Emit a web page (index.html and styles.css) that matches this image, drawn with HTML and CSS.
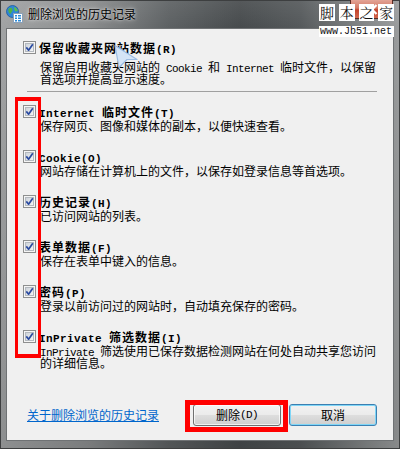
FILE: index.html
```html
<!DOCTYPE html>
<html lang="zh-CN">
<head>
<meta charset="utf-8">
<title>删除浏览的历史记录</title>
<link rel="stylesheet" href="styles.css">
</head>
<body>
<svg width="0" height="0" class="defs">
  <defs>
    <linearGradient id="cbg" x1="0" y1="0" x2="1" y2="1">
      <stop offset="0" stop-color="#cbd1d8"/>
      <stop offset="1" stop-color="#f6f7f8"/>
    </linearGradient>
    <symbol id="chk" viewBox="0 0 13 13">
      <rect x="0.5" y="0.5" width="12" height="12" fill="#f5f5f5" stroke="#8e8f8f"/>
      <rect x="2.5" y="2.5" width="8" height="8" fill="url(#cbg)" stroke="#b4b9bf"/>
      <path d="M3.3 6.4 L5.6 9.2 L9.8 3.2" fill="none" stroke="#2a4aa0" stroke-width="1.7" stroke-linejoin="round"/>
    </symbol>
  </defs>
</svg>
<div class="window">
  <div class="titlebar">
    <svg class="appicon" width="17" height="18" viewBox="0 0 17 18">
      <circle cx="6.5" cy="6.5" r="6" fill="#2f86d6" stroke="#1a5a9e" stroke-width="0.8"/>
      <path d="M2.5 4 C4 2 6 2.5 6.5 4.5 C7 6.5 5 7 4.5 9 C3 8.5 1.8 6 2.5 4 Z" fill="#4fb04a"/>
      <path d="M8 2 C10 2.5 11.5 4 11.8 6 L9 6.5 C8.5 5 8 3.5 8 2 Z" fill="#5cc04f"/>
      <rect x="7.5" y="8.5" width="9" height="9" fill="#ffffff" stroke="#8aa0b8"/>
      <rect x="9" y="10" width="2" height="1.5" fill="#2a8ad8"/>
      <rect x="12" y="10" width="3" height="1.5" fill="#2a8ad8"/>
      <rect x="9" y="12.5" width="2" height="1.5" fill="#2a8ad8"/>
      <rect x="12" y="12.5" width="3" height="1.5" fill="#2a8ad8"/>
      <rect x="9" y="15" width="2" height="1.5" fill="#2a8ad8"/>
      <rect x="12" y="15" width="3" height="1.5" fill="#2a8ad8"/>
    </svg>
    <span class="title">删除浏览的历史记录</span>
    <div class="closebtn">
      <svg width="12" height="11" viewBox="0 0 12 11"><path d="M1.5 1 L10.5 10 M10.5 1 L1.5 10" stroke="#ffffff" stroke-width="2.2"/></svg>
    </div>
  </div>

  <div class="client">
    <div class="first row">
      <svg class="cb" width="13" height="13"><use href="#chk"/></svg>
      <div class="text">
        <div class="label">保留收藏夹网站数据<span class="en">(R)</span></div>
        <div class="desc">保留启用收藏夹网站的<span class="en"> Cookie </span>和<span class="en"> Internet </span>临时文件，以保留<br>首选项并提高显示速度。</div>
      </div>
    </div>
    <div class="sep"></div>
    <div class="items">
      <div class="row">
        <svg class="cb" width="13" height="13"><use href="#chk"/></svg>
        <div class="text">
          <div class="label"><span class="en">Internet </span>临时文件<span class="en">(T)</span></div>
          <div class="desc">保存网页、图像和媒体的副本，以便快速查看。</div>
        </div>
      </div>
      <div class="row">
        <svg class="cb" width="13" height="13"><use href="#chk"/></svg>
        <div class="text">
          <div class="label"><span class="en">Cookie(O)</span></div>
          <div class="desc">网站存储在计算机上的文件，以保存如登录信息等首选项。</div>
        </div>
      </div>
      <div class="row">
        <svg class="cb" width="13" height="13"><use href="#chk"/></svg>
        <div class="text">
          <div class="label">历史记录<span class="en">(H)</span></div>
          <div class="desc">已访问网站的列表。</div>
        </div>
      </div>
      <div class="row">
        <svg class="cb" width="13" height="13"><use href="#chk"/></svg>
        <div class="text">
          <div class="label">表单数据<span class="en">(F)</span></div>
          <div class="desc">保存在表单中键入的信息。</div>
        </div>
      </div>
      <div class="row">
        <svg class="cb" width="13" height="13"><use href="#chk"/></svg>
        <div class="text">
          <div class="label">密码<span class="en">(P)</span></div>
          <div class="desc">登录以前访问过的网站时，自动填充保存的密码。</div>
        </div>
      </div>
      <div class="row">
        <svg class="cb" width="13" height="13"><use href="#chk"/></svg>
        <div class="text">
          <div class="label"><span class="en">InPrivate </span>筛选数据<span class="en">(I)</span></div>
          <div class="desc"><span class="en">InPrivate </span>筛选使用已保存数据检测网站在何处自动共享您访问<br>的详细信息。</div>
        </div>
      </div>
    </div>
    <div class="footer">
      <a class="link" href="#">关于删除浏览的历史记录</a>
      <div class="buttons">
        <button class="btn">删除<span class="en">(D)</span></button>
        <button class="btn default">取消</button>
      </div>
    </div>
  </div>

  <div class="watermark">
    <div class="wm-chars"><span>脚</span><span>本</span><span>之</span><span>家</span></div>
    <div class="wm-url">www.Jb51.net</div>
  </div>
  <svg class="cursor" width="28" height="26" viewBox="0 0 28 26">
    <path d="M3 1.5 L25 15.5 L15 15.5 L7 23.5 Z" fill="#d4e4f6" stroke="#9cbce2" stroke-width="1.2" stroke-linejoin="round"/>
  </svg>
  <div class="mark mark-list"></div>
  <div class="mark mark-btn"></div>
</div>
</body>
</html>
```

FILE: styles.css
```css
* { box-sizing: border-box; }

html, body {
  margin: 0;
  padding: 0;
}

body {
  width: 400px;
  height: 449px;
  overflow: hidden;
  font-family: "Noto Sans CJK SC", "Noto Sans", sans-serif;
  font-size: 12px;
  color: #000;
}

.defs {
  position: absolute;
  width: 0;
  height: 0;
}

.window {
  position: relative;
  width: 400px;
  height: 449px;
  display: flex;
  flex-direction: column;
  background:
    linear-gradient(180deg, rgba(255,255,255,0.08) 0px, rgba(0,0,0,0) 28px, rgba(0,0,0,0.12) 100%),
    linear-gradient(90deg, #a1a3a4 0%, #8b8d8e 22%, #5d6163 42%, #474b4d 60%, #55595b 75%, #858889 92%, #9b9d9e 100%);
  box-shadow: inset 0 0 0 1px #3d3f40;
}

.titlebar {
  height: 28px;
  flex: none;
  display: flex;
  align-items: flex-start;
  padding-left: 6px;
  position: relative;
}

.appicon {
  margin-top: 5px;
  flex: none;
}

.title {
  margin-top: 6px;
  margin-left: 5px;
  line-height: 16px;
  font-size: 12px;
  color: #000;
  text-shadow: 0 0 5px rgba(255,255,255,0.75), 0 0 2px rgba(255,255,255,0.6);
}

.closebtn {
  position: absolute;
  right: 7px;
  top: 0;
  width: 43px;
  height: 19px;
  border: 1px solid #5a2a22;
  border-top: none;
  border-radius: 0 0 5px 5px;
  background: linear-gradient(180deg, #e3a496 0%, #d47a66 45%, #c2432c 55%, #d2674f 100%);
  display: flex;
  align-items: center;
  justify-content: center;
}

.client {
  margin: 0 6px;
  width: 388px;
  height: 413px;
  background: #f0f0f0;
  border: 1px solid #6f7274;
  flex: none;
}

.row {
  display: grid;
  grid-template-columns: 13px 1fr;
  column-gap: 3px;
  align-items: start;
}

.cb {
  display: block;
}

.label {
  line-height: 14px;
  font-weight: bold;
  letter-spacing: 1px;
  white-space: nowrap;
}

.desc {
  line-height: 12px;
  padding-left: 1px;
  margin-top: 1px;
  white-space: nowrap;
}

.en {
  font-family: "Liberation Mono", "DejaVu Sans Mono", monospace;
  font-size: 11px;
  letter-spacing: -0.6px;
  line-height: 0;
  white-space: pre;
}

.label .en {
  letter-spacing: 0.4px;
}

.first {
  padding: 12px 0 0 16px;
}

.first .desc {
  margin-top: 6px;
}

.sep {
  margin: 6px 16px 0 20px;
  border-top: 1px solid #a0a0a0;
  height: 0;
}

.items {
  padding: 13px 0 0 16px;
  display: flex;
  flex-direction: column;
  gap: 18px;
}

.footer {
  display: flex;
  align-items: center;
  margin-top: 35px;
  padding: 0 16px 0 20px;
}

.link {
  color: #0066cc;
  text-decoration: underline;
  line-height: 14px;
}

.buttons {
  margin-left: auto;
  display: flex;
  gap: 8px;
}

.btn {
  width: 88px;
  height: 22px;
  padding: 0;
  border: 1px solid #707070;
  border-radius: 3px;
  background: linear-gradient(180deg, #f2f2f2 0%, #ebebeb 48%, #dddddd 52%, #cfcfcf 100%);
  box-shadow: inset 0 0 0 1px rgba(255,255,255,0.7);
  font-family: "Noto Sans CJK SC", sans-serif;
  font-size: 12px;
  line-height: 14px;
  color: #000;
  display: flex;
  align-items: center;
  justify-content: center;
}

.btn .en {
  letter-spacing: -0.6px;
}

.btn.default {
  border-color: #3c7fb1;
  box-shadow: inset 0 0 0 1px #7fd6f7;
}

.watermark {
  position: absolute;
  left: 319px;
  top: 4px;
  width: 75px;
}

.wm-chars {
  display: flex;
  gap: 4px;
}

.wm-chars span {
  background: #fff;
  width: 16px;
  height: 17px;
  font-size: 14px;
  line-height: 17px;
  text-align: center;
  color: #111;
  font-family: "Noto Serif CJK SC", "Noto Sans CJK SC", serif;
}

.wm-url {
  margin-top: 5px;
  background: #fff;
  height: 11px;
  font-family: "Liberation Mono", monospace;
  font-size: 10px;
  line-height: 11px;
  color: #111;
  padding-left: 1px;
  white-space: nowrap;
}

.cursor {
  position: absolute;
  left: 112px;
  top: 44px;
}

.mark {
  position: absolute;
  border: solid #ff0000;
}

.mark-list {
  left: 15px;
  top: 97px;
  width: 26px;
  height: 261px;
  border-width: 4px 3px;
}

.mark-btn {
  left: 185px;
  top: 400px;
  width: 103px;
  height: 32px;
  border-width: 5px;
}
```
